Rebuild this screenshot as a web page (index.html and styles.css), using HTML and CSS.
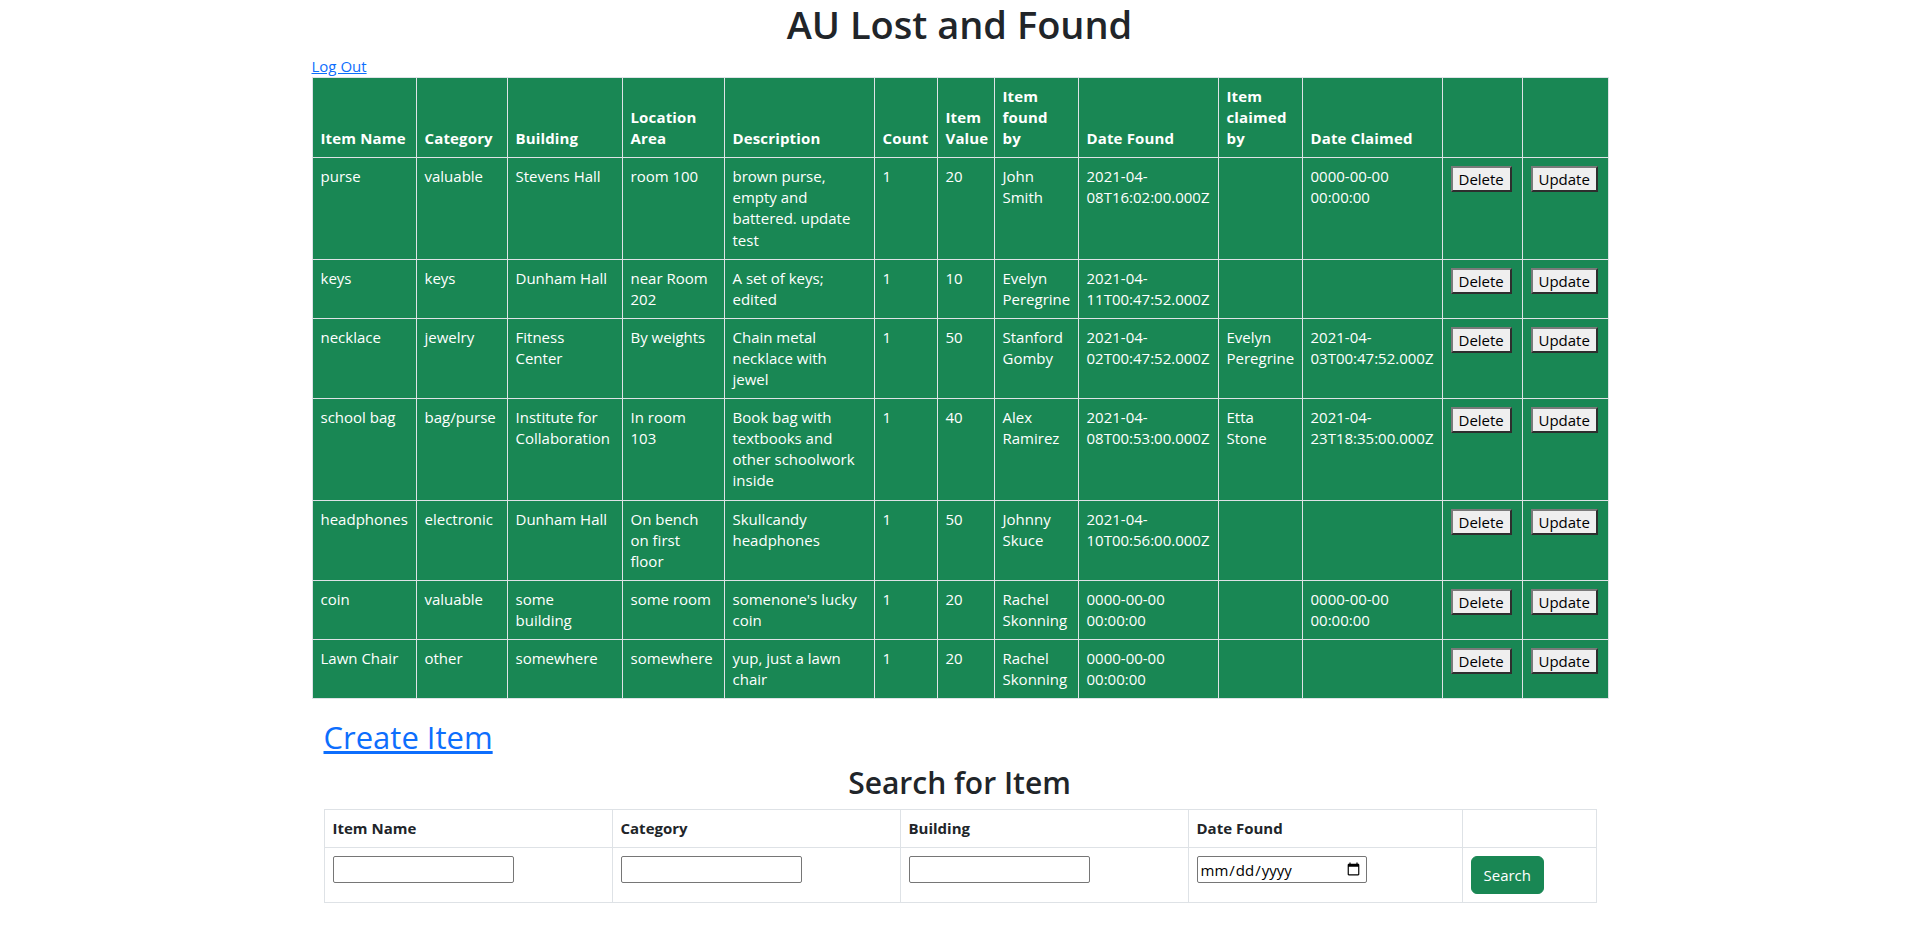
FILE: index.html
```html
<!DOCTYPE html>
<html lang="en">
<head>
<meta charset="utf-8">
<title>AU Lost and Found</title>
<link rel="stylesheet" href="styles.css">
</head>
<body>
<div class="container">
  <h1 class="title">AU Lost and Found</h1>
  <div class="logout"><a href="#">Log Out</a></div>
  <table class="items">
    <colgroup>
      <col class="c1"><col class="c2"><col class="c3"><col class="c4"><col class="c5"><col class="c6"><col class="c7"><col class="c8"><col class="c9"><col class="c10"><col class="c11"><col class="c12"><col class="c13">
    </colgroup>
    <thead>
      <tr>
        <th>Item Name</th><th>Category</th><th>Building</th><th>Location Area</th><th>Description</th><th>Count</th><th>Item Value</th><th>Item found by</th><th>Date Found</th><th>Item claimed by</th><th>Date Claimed</th><th></th><th></th>
      </tr>
    </thead>
    <tbody>
      <tr>
        <td>purse</td><td>valuable</td><td>Stevens Hall</td><td class="loc">room 100</td><td>brown purse, empty and battered. update test</td><td>1</td><td>20</td><td>John Smith</td><td>2021-04-08T16:02:00.000Z</td><td></td><td>0000-00-00 00:00:00</td>
        <td><button class="rowbtn">Delete</button></td><td><button class="rowbtn">Update</button></td>
      </tr>
      <tr>
        <td>keys</td><td>keys</td><td>Dunham Hall</td><td class="loc">near Room 202</td><td>A set of keys; edited</td><td>1</td><td>10</td><td>Evelyn Peregrine</td><td>2021-04-11T00:47:52.000Z</td><td></td><td></td>
        <td><button class="rowbtn">Delete</button></td><td><button class="rowbtn">Update</button></td>
      </tr>
      <tr>
        <td>necklace</td><td>jewelry</td><td>Fitness Center</td><td class="loc">By weights</td><td>Chain metal necklace with jewel</td><td>1</td><td>50</td><td>Stanford Gomby</td><td>2021-04-02T00:47:52.000Z</td><td>Evelyn Peregrine</td><td>2021-04-03T00:47:52.000Z</td>
        <td><button class="rowbtn">Delete</button></td><td><button class="rowbtn">Update</button></td>
      </tr>
      <tr>
        <td>school bag</td><td>bag/purse</td><td>Institute for Collaboration</td><td class="loc">In room 103</td><td>Book bag with textbooks and other schoolwork inside</td><td>1</td><td>40</td><td>Alex Ramirez</td><td>2021-04-08T00:53:00.000Z</td><td>Etta Stone</td><td>2021-04-23T18:35:00.000Z</td>
        <td><button class="rowbtn">Delete</button></td><td><button class="rowbtn">Update</button></td>
      </tr>
      <tr>
        <td>headphones</td><td>electronic</td><td>Dunham Hall</td><td class="loc">On bench on first floor</td><td>Skullcandy headphones</td><td>1</td><td>50</td><td>Johnny Skuce</td><td>2021-04-10T00:56:00.000Z</td><td></td><td></td>
        <td><button class="rowbtn">Delete</button></td><td><button class="rowbtn">Update</button></td>
      </tr>
      <tr>
        <td>coin</td><td>valuable</td><td>some building</td><td class="loc">some room</td><td>somenone's lucky coin</td><td>1</td><td>20</td><td>Rachel Skonning</td><td>0000-00-00 00:00:00</td><td></td><td>0000-00-00 00:00:00</td>
        <td><button class="rowbtn">Delete</button></td><td><button class="rowbtn">Update</button></td>
      </tr>
      <tr>
        <td>Lawn Chair</td><td>other</td><td>somewhere</td><td class="loc">somewhere</td><td>yup, just a lawn chair</td><td>1</td><td>20</td><td>Rachel Skonning</td><td>0000-00-00 00:00:00</td><td></td><td></td>
        <td><button class="rowbtn">Delete</button></td><td><button class="rowbtn">Update</button></td>
      </tr>
    </tbody>
  </table>

  <div class="inner">
    <h2 class="create"><a href="#">Create Item</a></h2>
    <h2 class="search-title">Search for Item</h2>
    <table class="search">
      <colgroup>
        <col class="s1"><col class="s2"><col class="s3"><col class="s4"><col class="s5">
      </colgroup>
      <thead>
        <tr><th>Item Name</th><th>Category</th><th>Building</th><th>Date Found</th><th></th></tr>
      </thead>
      <tbody>
        <tr>
          <td><input type="text" class="field"></td>
          <td><input type="text" class="field"></td>
          <td><input type="text" class="field"></td>
          <td><input type="date" class="field date"></td>
          <td><button class="btn-search">Search</button></td>
        </tr>
      </tbody>
    </table>
  </div>
</div>
</body>
</html>
```

FILE: styles.css
```css
html, body {
  margin: 0;
  padding: 0;
  background: #fff;
}

body {
  font-family: "Open Sans", "Noto Sans", sans-serif;
  font-size: 15px;
  line-height: 21px;
  color: #212529;
}

a {
  color: #0d6efd;
  text-decoration: underline;
}

.container {
  max-width: 1296px;
  margin: 0 auto;
  padding: 0 12px;
}

.title {
  margin: 0 0 5px;
  padding-top: 0;
  font-size: 38px;
  line-height: 48px;
  font-weight: 600;
  text-align: center;
  color: #212529;
}

.logout {
  padding-top: 2px;
  line-height: 22px;
}

/* Main green items table */
.items {
  width: 100%;
  table-layout: fixed;
  border-collapse: collapse;
  background: #198754;
  color: #fff;
  margin: 0 0 20px;
  border: 1px solid #dee2e6;
}

.items th,
.items td {
  border: 1px solid #dee2e6;
  padding: 8px;
  line-height: 21.1px;
  text-align: left;
  vertical-align: top;
}

.items th {
  font-weight: 700;
  letter-spacing: 0.15px;
  vertical-align: bottom;
}

.items td.loc {
  padding-right: 10px;
}

.c1 { width: 104px; }
.c2 { width: 91px; }
.c3 { width: 115px; }
.c4 { width: 102px; }
.c5 { width: 150px; }
.c6 { width: 63px; }
.c7 { width: 57px; }
.c8 { width: 84px; }
.c9 { width: 140px; }
.c10 { width: 84px; }
.c11 { width: 140px; }
.c12 { width: 80px; }
.c13 { width: 86px; }

.rowbtn {
  font-family: inherit;
  font-size: 15px;
  line-height: 20px;
  padding: 1px 6px;
  margin: 0;
  color: #000;
  background: #efefef;
  border-style: solid;
  border-width: 2px;
  border-color: #7a7a7a #2e2e2e #2e2e2e #7a7a7a;
  border-radius: 0;
}

/* Lower section */
.inner {
  padding: 0 12px;
}

.create {
  margin: 0 0 8px;
  font-size: 31px;
  line-height: 37px;
  font-weight: 500;
}

.search-title {
  margin: 0 0 8px;
  font-size: 30px;
  line-height: 37px;
  font-weight: 600;
  text-align: center;
}

.search {
  width: 100%;
  table-layout: fixed;
  border-collapse: collapse;
  border: 1px solid #dee2e6;
  margin: 0 0 16px;
}

.search th,
.search td {
  border: 1px solid #dee2e6;
  padding: 8px;
  text-align: left;
  vertical-align: top;
}

.search th {
  font-weight: 700;
}

.s1 { width: 288px; }
.s2 { width: 288px; }
.s3 { width: 288px; }
.s4 { width: 274px; }
.s5 { width: 134px; }

.field {
  box-sizing: border-box;
  width: 181px;
  height: 27px;
  margin: 0;
  padding: 1px 2px;
  font-family: inherit;
  font-size: 15px;
  border: 1px solid #767676;
  border-radius: 2px;
  background: #fff;
  vertical-align: top;
}

.field.date {
  width: 170px;
  padding: 1px 3px 1px 2px;
  color: #000;
}

.btn-search {
  font-family: inherit;
  font-size: 15px;
  line-height: 24px;
  padding: 6px 12px;
  margin: 0;
  color: #fff;
  background: #198754;
  border: 1px solid #198754;
  border-radius: 6px;
  vertical-align: top;
}
```
